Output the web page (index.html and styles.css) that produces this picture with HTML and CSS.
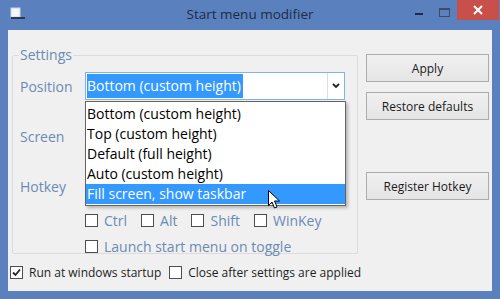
FILE: index.html
```html
<!DOCTYPE html>
<html lang="en">
<head>
  <meta charset="UTF-8">
  <title>Start menu modifier</title>
  <link rel="stylesheet" href="styles.css">
</head>
<body>
  <div class="window">
    <!-- title bar -->
    <div class="titlebar">
      <svg class="app-icon" width="16" height="14" viewBox="0 0 16 14">
        <rect x="1" y="1" width="9" height="9" fill="#f4f6fa" stroke="#c9d3e3" stroke-width="1"/>
        <rect x="1" y="10" width="14" height="2" fill="#2b3a4e"/>
      </svg>
      <div class="title">Start menu modifier</div>
      <div class="controls">
        <span class="ctl-min"></span>
        <span class="ctl-max"></span>
        <span class="ctl-close">
          <svg width="10" height="10" viewBox="0 0 10 10"><path d="M1 1 L9 9 M9 1 L1 9" stroke="#fff" stroke-width="2"/></svg>
        </span>
      </div>
    </div>

    <div class="client">
      <div class="main">
        <fieldset class="group">
          <legend>Settings</legend>
          <div class="form">
            <label class="lbl">Position</label>
            <div class="combo focused">
              <span class="combo-text"><span class="sel">Bottom (custom height)</span></span>
              <span class="combo-arrow">
                <svg width="8" height="6" viewBox="0 0 8 6"><path d="M1 1 L4 4 L7 1" fill="none" stroke="#222" stroke-width="1.8"/></svg>
              </span>
            </div>
            <label class="lbl">Screen</label>
            <div class="combo"></div>
            <label class="lbl">Hotkey</label>
            <div class="combo"></div>
          </div>

          <div class="keys">
            <span class="check"><span class="box"></span>Ctrl</span>
            <span class="check"><span class="box"></span>Alt</span>
            <span class="check"><span class="box"></span>Shift</span>
            <span class="check"><span class="box"></span>WinKey</span>
          </div>
          <div class="keys">
            <span class="check"><span class="box"></span>Launch start menu on toggle</span>
          </div>

          <!-- open dropdown of the Position combo -->
          <div class="droplist">
            <div class="item">Bottom (custom height)</div>
            <div class="item">Top (custom height)</div>
            <div class="item">Default (full height)</div>
            <div class="item">Auto (custom height)</div>
            <div class="item active">Fill screen, show taskbar</div>
          </div>
          <svg class="cursor" width="13" height="20" viewBox="0 0 13 20">
            <path d="M0.5 0.5 L0.5 15.5 L4 12 L6.5 18 L9 17 L6.5 11 L11.5 11 Z" fill="#fff" stroke="#000" stroke-width="1"/>
          </svg>
        </fieldset>

        <div class="buttons">
          <button class="btn">Apply</button>
          <button class="btn">Restore defaults</button>
          <button class="btn btn-hotkey">Register Hotkey</button>
        </div>
      </div>

      <div class="footer">
        <span class="check dark"><span class="box checked">
          <svg width="11" height="11" viewBox="0 0 11 11"><path d="M2 5.5 L4.5 8 L9 2.5" fill="none" stroke="#222" stroke-width="1.8"/></svg>
        </span>Run at windows startup</span>
        <span class="check dark"><span class="box"></span>Close after settings are applied</span>
      </div>
    </div>
  </div>
</body>
</html>
```

FILE: styles.css
```css
body {
  margin: 0;
  padding: 0;
  font-family: 'Open Sans', 'Noto Sans', sans-serif;
}

.window {
  width: 500px;
  height: 299px;
  box-sizing: border-box;
  background-color: #5a80be;
  padding: 0 8px 8px 8px;
  display: flex;
  flex-direction: column;
}

/* title bar */
.titlebar {
  height: 30px;
  position: relative;
  display: flex;
  align-items: center;
}
.app-icon {
  margin-left: 2px;
  margin-top: -2px;
}
.title {
  position: absolute;
  left: 0;
  right: 0;
  top: 5px;
  text-align: center;
  font-size: 13.5px;
  color: #1c2c44;
}
.controls {
  margin-left: auto;
  margin-right: -7px;
  align-self: flex-start;
  display: flex;
  align-items: flex-start;
  height: 20px;
}
.ctl-min {
  width: 8px;
  height: 2px;
  background: #1c2c44;
  margin-top: 13px;
  margin-right: 16px;
}
.ctl-max {
  width: 9px;
  height: 6px;
  border: 1px solid #3a4c66;
  border-top-width: 2px;
  margin-top: 8px;
  margin-right: 7px;
}
.ctl-close {
  width: 42px;
  height: 20px;
  background: #c7504b;
  display: flex;
  align-items: center;
  justify-content: center;
}

/* client area */
.client {
  flex: 1;
  background-color: #f0f0f0;
  display: flex;
  flex-direction: column;
}
.main {
  display: flex;
}

.group {
  position: relative;
  margin: 16px 0 0 4px;
  width: 346px;
  height: 208px;
  box-sizing: border-box;
  border: 1px solid #dcdcdc;
  border-radius: 2px;
  padding: 0 0 0 7px;
}
.group legend {
  padding: 0 1px;
  margin-left: -1px;
  font-size: 14px;
  line-height: 18px;
  color: #6a8bb5;
}

.form {
  margin-top: 8px;
  display: grid;
  grid-template-columns: 65px 260px;
  grid-auto-rows: 28px;
  row-gap: 22px;
  align-items: center;
}
.lbl {
  font-size: 14px;
  color: #6a8bb5;
}

.combo {
  height: 28px;
  box-sizing: border-box;
  border: 1px solid #acacac;
  background: #fff;
  display: flex;
  align-items: stretch;
}
.combo.focused {
  border-color: #7eb4ea;
}
.combo-text {
  flex: 1;
  padding: 1px;
  display: flex;
}
.sel {
  background: #3399ff;
  color: #fff;
  font-size: 14px;
  line-height: 24px;
  padding-right: 2px;
}
.combo-arrow {
  width: 16px;
  border-left: 1px solid #dcdcdc;
  display: flex;
  align-items: center;
  justify-content: center;
}

.keys {
  display: flex;
  gap: 14px;
  margin-top: 12px;
  height: 16px;
  align-items: center;
}
.keys + .keys {
  margin-top: 10px;
}
.check {
  display: flex;
  align-items: center;
  font-size: 14px;
  color: #6a8bb5;
  white-space: nowrap;
}
.check.dark {
  color: #1e1e1e;
  font-size: 12px;
}
.keys .check:first-child {
  margin-left: 65px;
}
.box {
  width: 11px;
  height: 11px;
  border: 1px solid #4d4d4d;
  background: #fff;
  margin-right: 6px;
  display: flex;
  align-items: center;
  justify-content: center;
}

.droplist {
  position: absolute;
  left: 72px;
  top: 37px;
  width: 261px;
  box-sizing: border-box;
  border: 1px solid #646464;
  background: #fff;
  box-shadow: 2px 2px 3px rgba(0, 0, 0, 0.25);
  padding: 2px 0 1px 0;
}
.item {
  height: 20px;
  line-height: 19px;
  padding-left: 1px;
  font-size: 14px;
  color: #000;
}
.item.active {
  background: #3399ff;
  color: #fff;
}
.cursor {
  position: absolute;
  left: 255px;
  top: 126px;
}

/* right buttons */
.buttons {
  margin-left: 8px;
  margin-top: 24px;
  display: flex;
  flex-direction: column;
  gap: 10px;
}
.btn {
  width: 123px;
  height: 28px;
  border: 1px solid #acacac;
  background: linear-gradient(#f0f0f0, #e5e5e5);
  font-family: 'Open Sans', 'Noto Sans', sans-serif;
  font-size: 12px;
  color: #1a1a1a;
  padding: 0;
}
.btn-hotkey {
  margin-top: 42px;
}

.footer {
  display: flex;
  gap: 8px;
  margin-top: 10px;
  padding-left: 2px;
  height: 16px;
  align-items: center;
}
```
